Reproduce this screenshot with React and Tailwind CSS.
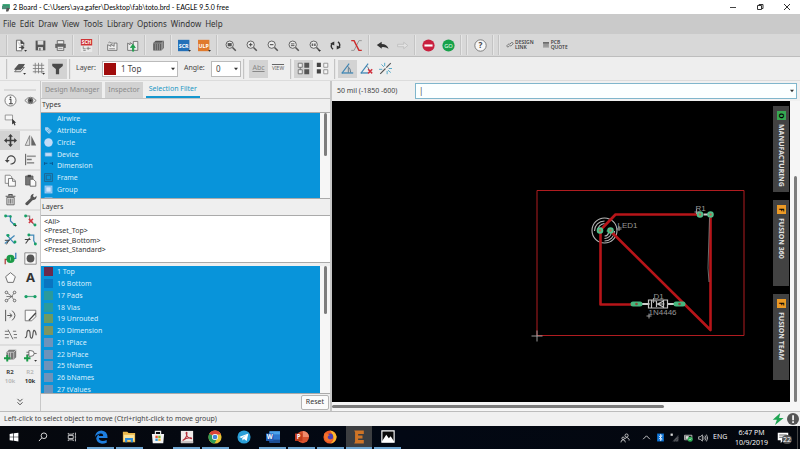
import React, { useState } from 'react';

const types = ['Airwire', 'Attribute', 'Circle', 'Device', 'Dimension', 'Frame', 'Group', 'Hole'];

const presets = ['<All>', '<Preset_Top>', '<Preset_Bottom>', '<Preset_Standard>'];

const layers = [
  { name: '1 Top', color: 'bg-[#6b2a4c]' },
  { name: '16 Bottom', color: 'bg-[#0a74c0]' },
  { name: '17 Pads', color: 'bg-[#2a9a9c]' },
  { name: '18 Vias', color: 'bg-[#2a9a9c]' },
  { name: '19 Unrouted', color: 'bg-[#6d9a62]' },
  { name: '20 Dimension', color: 'bg-[#7f9560]' },
  { name: '21 tPlace', color: 'bg-[#6e93ba]' },
  { name: '22 bPlace', color: 'bg-[#6e93ba]' },
  { name: '25 tNames', color: 'bg-[#6e93ba]' },
  { name: '26 bNames', color: 'bg-[#6e93ba]' },
  { name: '27 tValues', color: 'bg-[#6e93ba]' },
];

const lens = (
  <>
    <circle cx="7" cy="7" r="4.5" fill="#ececec" stroke="#555" strokeWidth="1.1" />
    <path d="M10.5 10.5L14.5 14.5" stroke="#555" strokeWidth="1.8" />
  </>
);

const corner = <path d="M12.5 13.5h3.5l-1.75 2.2z" fill="#333" stroke="none" />;

// every icon is drawn on a 16x16 grid
const icons = {
  open: <><path d="M3 1.5h6l3 3v4M3 1.5v13h7" stroke="#555" fill="#fafafa" /><path d="M8.5 1.5v4h4M6 10.5h6M9.5 8l3 2.5-3 2.5z" fill="#444" stroke="#444" />{corner}</>,
  save: <><path d="M2 2h12v12H2z" fill="#555" /><path d="M4.5 2h7v5h-7z" fill="#ddd" /><path d="M5 10h6v4H5z" fill="#ddd" /><path d="M6.5 11h1.5v3H6.500z" fill="#555" /></>,
  print: <><path d="M1.500 6h13v5h-13z" fill="#666" /><path d="M4 2h8v4H4zM4 9h8v5H4z" fill="#eee" stroke="#555" /><path d="M5.500 11.500h5" stroke="#777" /></>,
  sch: <><path d="M1 0h14v16H1z" fill="#e9e9e9" /><path d="M1 0h14v8H1z" fill="#cf3436" /><text x="8" y="6.500" fontSize="6" fontWeight="700" textAnchor="middle" fill="#fff">SCH</text><path d="M4 9v3h3M10 9.500v4M8 11.500h5M4 14h3" stroke="#777" fill="none" /></>,
  factory: <><path d="M2 14V7l4 2V6.500l4 2.500V5h3.500v9z" fill="#eee" stroke="#666" /><path d="M3 4.500q1.500-1.500 3 0t3 0M4 12h7" stroke="#777" fill="none" /></>,
  factoryUp: <><path d="M2 14V5l3 2V4.500l4 2.500V3h5.500v11z" fill="#eee" stroke="#666" /><path d="M8 15V10.500H5.500L8.500 6.500l3 4H9.500V15z" fill="#1f9d4c" stroke="#1f9d4c" /></>,
  library: <><path d="M1.500 5l3-3h10v9l-3 3h-10z" fill="#555" /><path d="M1.500 5h10v9M11.500 5l3-3M4 6v8M6.500 6v8M9 6v8M13 4v8" stroke="#bbb" strokeWidth=".8" fill="none" /></>,
  scr: <><path d="M0 1h14v14H0z" fill="#2470b8" /><text x="7" y="10.500" fontSize="6.500" fontWeight="700" textAnchor="middle" fill="#fff">SCR</text>{corner}</>,
  ulp: <><path d="M0 1h14v14H0z" fill="#e07a2d" /><text x="7" y="10.500" fontSize="6.500" fontWeight="700" textAnchor="middle" fill="#fff">ULP</text>{corner}</>,
  zoomFit: <>{lens}<path d="M4.500 5h5v4h-5z" fill="#555" /></>,
  zoomIn: <>{lens}<path d="M7 4.800v4.400M4.800 7h4.400" stroke="#444" strokeWidth="1.200" /></>,
  zoomOut: <>{lens}<path d="M4.800 7h4.400" stroke="#444" strokeWidth="1.300" /></>,
  zoomRedraw: <>{lens}<path d="M4.800 6h4.400M4.800 8.200h4.400" stroke="#444" strokeWidth="1.100" /></>,
  zoomSelect: <>{lens}<path d="M4.500 5.500h2v3h-2zM7.500 5.500h2v3h-2z" fill="#666" />{corner}</>,
  refresh: <><path d="M5 12.500A4.500 4.500 0 0 1 4.500 5M11 3.500a4.500 4.500 0 0 1 .5 7.500" stroke="#333" strokeWidth="1.800" fill="none" /><path d="M1.500 5.500L6.500 3v5zM14.500 10.500L9.500 13V8z" fill="#333" /></>,
  swap: <><path d="M14.500 2H11L5 14H1.500" stroke="#999" strokeWidth="1.200" fill="none" /><path d="M1.500 2H5L11 14h3.500" stroke="#cc2b2b" strokeWidth="1.800" fill="none" /></>,
  undo: <path d="M1 7.500L7 3.500V6q6.500 0 8.500 6-3.500-2.500-8.500-2v2z" fill="#333" />,
  redo: <path d="M14.500 8L9.500 4v2.500H2v3h7.500V12z" fill="#e2e2e2" stroke="#bcbcbc" />,
  stop: <><circle cx="8" cy="8" r="7.500" fill="#c9203f" /><path d="M3 6.700h10v2.600H3z" fill="#fff" /></>,
  go: <><circle cx="8" cy="8" r="7.500" fill="#17a14a" /><text x="8" y="10.500" fontSize="7" textAnchor="middle" fill="#e5ffe9">GO</text></>,
  help: <><circle cx="8" cy="8" r="7" fill="#f7f7f7" stroke="#666" /><text x="8" y="11.500" fontSize="10" fontWeight="700" textAnchor="middle" fill="#444">?</text></>,
  link: <path d="M7 9L5 11.500a2 2 0 0 1-3-2.500l2.500-2.500a2 2 0 0 1 3 0M8 6l2.500-2.500a2 2 0 0 1 3 3L11 9a2 2 0 0 1-3 0" stroke="#555" strokeWidth="1.500" fill="none" />,
  quote: <><path d="M2 2.500h12v11H2z" fill="#aaa" /><path d="M2 2.500h12v2.500H2z" fill="#555" /><path d="M3 7.500h10M3 10h10" stroke="#777" /></>,
  layerStack: <><path d="M2 12L7 6.500h7L9.500 12z" fill="#ddd" stroke="#555" /><path d="M2 9l5-6h7L9.500 9z" fill="#555" stroke="#444" />{corner}</>,
  grid: <><path d="M4 1v13M8 1v13M12 1v13M1 4h14M1 8h14M1 12h14" stroke="#777" />{corner}</>,
  filter: <path d="M1.500 2h13v3L10 8.500V15H6V8.500L1.500 5z" fill="#4a4a4a" />,
  moveGroupA: <><path d="M1.500 1.500h5v5h-5zM1.500 9.500h5v5h-5z" fill="#eee" stroke="#666" /><path d="M9 1h6v6H9zM9 9h6v6H9z" fill="#555" /><path d="M4 6.500v3" stroke="#666" /></>,
  moveGroupB: <><path d="M1 1h5v5H1zM1 9h5v5H1z" fill="#444" /><path d="M9.500 1.500h5v5h-5zM9.500 9.500h5v5h-5z" fill="#f5f5f5" stroke="#888" /></>,
  angle: <><path d="M1 14L10 2" stroke="#3f87b5" strokeWidth="1.300" /><path d="M1 13.500h14" stroke="#3f87b5" strokeWidth="1.600" /><path d="M8 5q4 3 4 8M9 7v6" stroke="#4b6a80" fill="none" /></>,
  angleOff: <><path d="M1 14L10 2" stroke="#3f87b5" strokeWidth="1.300" /><path d="M1 13.500h9" stroke="#3f87b5" strokeWidth="1.600" /><path d="M8 5q3 2 3 5" stroke="#4b6a80" fill="none" /><path d="M10 9l5 5M15 9l-5 5" stroke="#cf2f3d" strokeWidth="1.800" /></>,
  wand: <><path d="M1.500 14.500L8 8M9 7l5.500-5.500" stroke="#555" strokeWidth="1.400" /><path d="M7 1v4M3 3l3 3M12 8h4M0 9h4M10 11v4M11 10l3.500 3" stroke="#54a8c7" strokeWidth="1.200" /></>,
  info: <><circle cx="8" cy="8" r="6.800" fill="#fafafa" stroke="#666" /><path d="M6.500 6.500H8.500V12M6 12h5" stroke="#444" strokeWidth="1.300" fill="none" /><circle cx="8" cy="4.200" r="1" fill="#444" /></>,
  eye: <><path d="M1 8q7-8 14 0-7 8-14 0z" fill="#f3f3f3" stroke="#666" /><circle cx="8" cy="8" r="3.500" fill="#666" /><circle cx="8" cy="8" r="1.300" fill="#222" /></>,
  mark: <><path d="M1.500 2.500h9v6h-9z" fill="#f8f8f8" stroke="#888" /><path d="M10 7v7l1.800-1.500 1.200 3 1.200-.6-1.200-2.800H15z" fill="#333" /></>,
  move: <path d="M8 0l3 3.500H9V7h3.500V5L16 8l-3.500 3V9H9v3.500h2L8 16l-3-3.500h2V9H3.500v2L0 8l3.500-3v2H7V3.500H5z" fill="#3b3b3b" />,
  mirror: <><path d="M7 2v12H1.500z" fill="#ddd" stroke="#777" /><path d="M9 2v12h6z" fill="#666" /></>,
  rotate: <><path d="M4 10a5 5 0 1 1 4 3.500" stroke="#444" strokeWidth="1.400" fill="none" /><path d="M1 8.500h6L4 12z" fill="#444" /></>,
  align: <><path d="M2 1v14" stroke="#555" strokeWidth="1.200" /><path d="M3.500 3h11v2h-11z" fill="#999" /><path d="M3.500 7h6v2h-6zM3.500 11.500h9v1.500h-9z" fill="#777" /></>,
  copy: <><path d="M1.500 1.500h6l2 2v8h-8z" fill="#fafafa" stroke="#777" /><path d="M5.500 5.500h5.500l3 3v6.500H5.500zM10.500 5.500v3.500H14" fill="#fafafa" stroke="#666" /></>,
  paste: <><path d="M2 2.500h9v11H2z" fill="#777" stroke="#555" /><path d="M4.500 1h4v3h-4z" fill="#444" /><path d="M7.500 6.500h4l3 3v5.500h-7z" fill="#fafafa" stroke="#555" /></>,
  trash: <><path d="M2 4h12M6 3.500V2h4v1.500" stroke="#555" strokeWidth="1.300" fill="none" /><path d="M3.500 5.500h9V14.500h-9z" fill="#ddd" stroke="#555" /><path d="M6 7v6M8 7v6M10 7v6" stroke="#666" /></>,
  wrench: <path d="M1.500 12.500L8 6.500Q7.500 2 12 1l-1 3 2 1.500L15.500 3.500Q16 8.500 10.500 9L4.500 15.200q-3 0-3-2.700z" fill="#555" />,
  route: <><path d="M2 2.500h6v6l5 5" stroke="#3b7fb5" strokeWidth="1.500" fill="none" /><circle cx="2" cy="2.500" r="1.800" fill="#17a065" /><circle cx="8" cy="3" r="1.500" fill="#17a065" /><circle cx="13" cy="13" r="1.800" fill="#17a065" />{corner}</>,
  ripup: <><path d="M2 2.500h5v5l6 6" stroke="#777" strokeWidth="1.300" fill="none" /><circle cx="2" cy="2.500" r="1.800" fill="#17a065" /><circle cx="13.500" cy="13.500" r="1.800" fill="#17a065" /><path d="M6 6l5 5M11 6l-5 5" stroke="#d23440" strokeWidth="1.800" /></>,
  slice: <><path d="M1 13L13 3M3 2l10 11" stroke="#4289b8" strokeWidth="1.500" /><circle cx="5" cy="3" r="1.800" fill="#17a065" /><circle cx="13.500" cy="11" r="1.800" fill="#17a065" /><path d="M1 9h6M3 14l3-5" stroke="#444" strokeWidth="1.200" /></>,
  split: <><path d="M6 2.500h6v7l2 4" stroke="#4289b8" strokeWidth="1.500" fill="none" /><circle cx="6" cy="2.500" r="1.800" fill="#17a065" /><circle cx="14" cy="13.500" r="1.800" fill="#17a065" /><path d="M1 8h7M2 13l5-7" stroke="#444" strokeWidth="1.300" /></>,
  via: <><path d="M1.500 15V9H8" stroke="#b03a3a" strokeWidth="1.500" fill="none" /><path d="M14.500 1v7H8" stroke="#2878b8" strokeWidth="1.500" fill="none" /><circle cx="8" cy="8.500" r="5" fill="#1c9a48" /><path d="M8 6.500v4" stroke="#8fe0a4" /></>,
  hole: <><path d="M1 1h14v14H1z" fill="#fafafa" stroke="#777" /><circle cx="8" cy="8" r="4.800" fill="#555" /></>,
  polygon: <path d="M8 2l6 5-2.500 7h-7L2 7z" fill="#fafafa" stroke="#555" />,
  text: <text x="8" y="14" fontSize="16" fontWeight="700" textAnchor="middle" fill="#333">A</text>,
  net: <><path d="M3 3q5 2 10 10M13 3Q10 9 3 13M3 8h8" stroke="#666" fill="none" /><circle cx="3" cy="3" r="1.600" fill="#eee" stroke="#555" /><circle cx="13" cy="3" r="1.600" fill="#eee" stroke="#555" /><circle cx="3" cy="13" r="1.600" fill="#eee" stroke="#555" /><circle cx="13" cy="13" r="1.600" fill="#eee" stroke="#555" /></>,
  wire: <><path d="M2 8h12" stroke="#58a98a" strokeWidth="1.500" /><circle cx="2.500" cy="8" r="2" fill="#17a065" /><circle cx="13.500" cy="8" r="2" fill="#17a065" /></>,
  arc: <path d="M2 1v14M4 8h5M7 5.500L10 8l-3 2.500M10 2q7 6 0 12" stroke="#555" strokeWidth="1.200" fill="none" />,
  miter: <><path d="M1.500 1.500h13v8l-5 5h-8z" fill="#fafafa" stroke="#666" /><path d="M6 14L14.500 5" stroke="#444" strokeWidth="1.600" /></>,
  optimize: <path d="M1 4h5M1 8h5M1 12h5M5 2l6 12M11 4h4M12 8h4M12 12h4" stroke="#666" strokeWidth="1.100" fill="none" />,
  meander: <path d="M1 12q2.500 0 2.500-4.500t2-4.500 2 4.500 1.500 5 2-5 2-4.500 2 6" stroke="#555" strokeWidth="1.400" fill="none" />,
  addPart: <><path d="M3 4l3-3h9v9l-3 3H3z" fill="#777" /><path d="M3 4h9v9M12 4l3-3M5.500 4v8M8 4v8" stroke="#ccc" fill="none" /><path d="M4 7.500v8M0 11.500h8" stroke="#1c9a48" strokeWidth="2.400" /></>,
  addGate: <><path d="M6 2h2.500q4 0 4 3.500t-4 3.500H6zM3 4h3M3 7h3M12.500 5.500h3" fill="#fafafa" stroke="#555" /><path d="M4 7.500v8M0 11.500h8" stroke="#1c9a48" strokeWidth="2.400" />{corner}</>,
  more: <path d="M4 3l4 4 4-4M4 8.500l4 4 4-4" stroke="#444" strokeWidth="1.500" fill="none" />,
  windows: <path d="M1 3l6-1v5.500H1zM8 1.800L15 1v6.500H8zM1 8.500h6V14l-6-1zM8 8.500h7V15l-7-1z" fill="#fff" />,
  search: <><circle cx="9.500" cy="6" r="4.500" fill="none" stroke="#eee" strokeWidth="1.400" /><path d="M6 9.500L1.500 14.500" stroke="#eee" strokeWidth="1.500" /></>,
  taskView: <><path d="M2 5.500h8v5H2zM2 1.500v2h8v-2M2 14.500v-2h8v2M13.500 1v5M13.500 10v5" fill="none" stroke="#e6e6e6" strokeWidth="1.300" /><path d="M12.500 7h2v2h-2z" fill="#fff" /></>,
  edge: <path d="M1 8Q2 .5 8.500 .5 15.500 1 15.500 9H5.500q.5 3.500 4.500 3.500 2.500 0 4.500-1v3Q12 15.700 9 15.700 3 15 2.500 9.500 3 6 6.500 4.500 5.500 5.500 5.500 6.800H10.500Q10.500 4 8 4 3.500 4 1 8z" fill="#1e7fe0" />,
  explorer: <><path d="M1 2h5l1.500 1.500H15V14H1z" fill="#e9b84c" /><path d="M2 5.500h12V12H2z" fill="#fbe49a" /><path d="M3.500 9h9v5h-2.500v-2.500H6V14H3.500z" fill="#2f8fdc" /></>,
  store: <><path d="M5 5V1.500h6V5" fill="none" stroke="#eee" strokeWidth="1.300" /><path d="M1 4.500h14l-1 10.500H2z" fill="#f3f3f3" /><path d="M5 6.500h2.700v2.700H5z" fill="#e5502f" /><path d="M8.300 6.500H11v2.700H8.300z" fill="#7ab52c" /><path d="M5 9.800h2.700v2.700H5z" fill="#2f96dc" /><path d="M8.300 9.800H11v2.700H8.300z" fill="#eeb429" /></>,
  acrobat: <><path d="M1 1h14v14H1z" fill="#f1eceb" /><path d="M1 12.500h14V15H1z" fill="#c9c4c4" /><path d="M3 12q5-3 5-9-1-1-1 1 1 5 6 6 1-1-1-1.200Q7 8.500 3 12z" fill="none" stroke="#b5303a" strokeWidth="1.200" /></>,
  chrome: <><circle cx="8" cy="8" r="7.500" fill="#e9c534" /><path d="M8 8L1.500 4.300A7.500 7.500 0 0 1 14.800 5H8z" fill="#db4437" /><path d="M8 8L1.500 4.300A7.500 7.500 0 0 0 7.500 15.500L10.500 9.500z" fill="#2d9c57" /><circle cx="8" cy="8" r="3.500" fill="#fff" /><circle cx="8" cy="8" r="2.700" fill="#4285d8" /></>,
  telegram: <><circle cx="8" cy="8" r="7.500" fill="#2b9fd8" /><path d="M2.500 8L13 4l-2 8.500-3-2.200-1.700 1.700-.3-3L11 5.500 5 9z" fill="#fff" /></>,
  word: <><path d="M4 1.500h12v13H4z" fill="#2f78cf" /><path d="M4 1.500h12V5H4z" fill="#4da3ea" /><path d="M4 11h12v3.500H4z" fill="#1b4c94" /><path d="M0 4h8.500v8.500H0z" fill="#1f5bb5" /><text x="4.200" y="10.800" fontSize="7" fontWeight="700" textAnchor="middle" fill="#fff">W</text></>,
  powerpoint: <><circle cx="9" cy="8" r="7" fill="#d9532f" /><path d="M9 1a7 7 0 0 1 7 7H9z" fill="#f08a6b" /><path d="M0 4h8.500v8.500H0z" fill="#c13b1b" /><text x="4.200" y="10.800" fontSize="7" fontWeight="700" textAnchor="middle" fill="#fff">P</text></>,
  firefox: <><circle cx="8" cy="8" r="7.500" fill="#ee5a24" /><path d="M8 .5q6 1 7.500 7-.5 7-7 8 5-4 3-9-1-3-3.500-6z" fill="#f9b92c" /><circle cx="8" cy="7.500" r="3.600" fill="#4b3fb3" /><path d="M1.500 4q2-1 4 .5L8 6q-3 0-2.500 3 2 3 6 1-3 5-8 2-3-3-2-8z" fill="#f3722c" /></>,
  eagle: <path d="M2.500 .500h11v4H7v1.700h5v3.500H7v1.800h6.500v4h-11l1-2V2.500z" fill="#cf7426" />,
  photos: <><path d="M1 1h14v13H1z" fill="#0a0a0a" stroke="#fff" strokeWidth="1.300" /><path d="M1 13l5-7.500 3 4 2-2.500 4 6v1H1z" fill="#fff" /></>,
  people: <path d="M10.500 1.500a2.500 2.500 0 1 1 0 5 2.500 2.500 0 0 1 0-5M8 9.500q2.500-5 6.500.5v2M5 6.500a2 2 0 1 1 0 4 2 2 0 0 1 0-4M1.500 15q0-4 3.500-4t3.500 4" fill="none" stroke="#ddd" strokeWidth="1.300" />,
  chevronUp: <path d="M2 11l6-6 6 6" fill="none" stroke="#e5e5e5" strokeWidth="1.500" />,
  bluetooth: <><path d="M2 1h12v14H2z" fill="#0f74d6" /><path d="M5 5l6 6-3 2.500v-11L11 5l-6 6" fill="none" stroke="#fff" strokeWidth="1.300" /></>,
  signal: <><path d="M15 3v12H4z" fill="#3b3f47" /><path d="M1 1h4v4H1z" fill="#ddd" /><path d="M8 15q0-5 7-7M12 15q0-3 3-4" stroke="#777" fill="none" /></>,
  battery: <><path d="M1 4h13v8H1z" fill="#111" stroke="#ddd" strokeWidth="1.400" /><path d="M2.500 5.500h6v5h-6z" fill="#ddd" /><circle cx="11" cy="11" r="4.500" fill="#2fae57" /><path d="M9 11l1.500 1.500L13 9.500" stroke="#fff" fill="none" /></>,
  volume: <path d="M1 6h2.500L7 3v10L3.500 10H1zM9 5.500q2 2.500 0 5M11.300 4q3 4 0 8M13.500 2.500q4 5.500 0 11" fill="none" stroke="#ddd" strokeWidth="1.200" />,
  bolt: <path d="M11 0L1 9h5.500L4 16 15.500 6.500H9.500z" fill="#1fa553" />,
  alert: <><circle cx="8" cy="8" r="8" fill="#555" /><path d="M7 3h2.200v6.500H7zM7 11h2.200v2.200H7z" fill="#fff" /></>,
  tagWhite: <><path d="M2 2h5l7 7-5 5-7-7z" fill="#a9d3f3" /><path d="M5 7l5 4M7 5l5 4" stroke="#0a94da" /></>,
  circleWhite: <circle cx="8" cy="8" r="7.500" fill="#c3dcf8" />,
  device: <path d="M2 5h12v6H2z" fill="#c3dcf8" stroke="#7fb7e6" />,
  dimension: <path d="M1 2v5M15 2v5M2 4h4M10 4h4" stroke="#0b4f86" strokeWidth="1.600" />,
  frame: <path d="M1 1h14v14H1zM4 4h8v8H4z" fill="none" stroke="#235e86" strokeWidth="1.400" />,
  group: <><path d="M1 1h14v14H1z" fill="#9ccaf3" /><path d="M3.500 3.500h9v9h-9z" fill="#cfe4fb" stroke="#6fb0e5" /></>,
  holeWhite: <><path d="M1 1h14v14H1z" fill="#e7d9ea" /><circle cx="8" cy="8" r="4" fill="#4b5ea6" /></>,
};

const typeIcons = [null, 'tagWhite', 'circleWhite', 'device', 'dimension', 'frame', 'group', 'holeWhite'];

const Icon = ({ name, className = 'size-3' }) => (
  <svg viewBox="0 0 16 16" className={`shrink-0 overflow-visible ${className}`} fill="none" aria-hidden="true">
    {icons[name]}
  </svg>
);

const ToolButton = ({ name, active, className = 'w-5 h-5' }) => (
  <button
    type="button"
    aria-label={name}
    className={`flex shrink-0 items-center justify-center ${className} ${active ? 'bg-[#d3d3d3]' : ''}`}
  >
    <Icon name={name} className="size-[13px]" />
  </button>
);

const ToolGroup = ({ names }) => (
  <div className="flex items-center">
    {names.map((n) => <ToolButton key={n} name={n} />)}
  </div>
);

const Divider = () => <span className="mx-[2px] h-5 w-[2px] shrink-0 border-l border-[#c4c4c4] bg-[#e6e6e6]" />;

const TitleBar = () => (
  <header className="flex h-[14px] shrink-0 items-center bg-white pl-[2px] font-['Open_Sans',sans-serif] text-black">
    <svg viewBox="0 0 16 16" className="size-[9px]" aria-hidden="true">
      <path d="M1 2h13v8H1z" fill="#2a9d6a" />
      <path d="M0 5h12v6H0z" fill="#4a8f78" />
      <path d="M8 9h6l-3 6H7z" fill="#555" />
    </svg>
    <h1 className="ml-[2px] grow font-['Lato',sans-serif] text-[7px] whitespace-nowrap">2 Board - C:\Users\aya.gafer\Desktop\fab\toto.brd - EAGLE 9.5.0 free</h1>
    <div className="flex">
      <button type="button" aria-label="Minimize" className="flex w-[27px] justify-center">
        <svg viewBox="0 0 8 8" className="size-2"><path d="M1 4.500h6" stroke="#444" /></svg>
      </button>
      <button type="button" aria-label="Restore" className="flex w-[27px] justify-center">
        <svg viewBox="0 0 8 8" className="size-2"><path d="M1.500 2.500h4v4h-4zM3 2.500v-1h4v4H5.500" fill="none" stroke="#333" /></svg>
      </button>
      <button type="button" aria-label="Close" className="flex w-[27px] justify-center">
        <svg viewBox="0 0 8 8" className="size-2"><path d="M1 1l6 6M7 1L1 7" stroke="#333" /></svg>
      </button>
    </div>
  </header>
);

const MenuBar = () => (
  <nav className="flex h-5 shrink-0 items-center gap-1 bg-[#cacaca] px-[3px] text-[8px] text-[#333]">
    {['File', 'Edit', 'Draw', 'View', 'Tools', 'Library', 'Options', 'Window', 'Help'].map((m) => (
      <button key={m} type="button">{m}</button>
    ))}
  </nav>
);

const MainToolbar = () => (
  <div className="flex h-[23px] shrink-0 items-center border-b border-[#bdbdbd] bg-[#d8d8d8] pl-1">
    <Divider />
    <ToolGroup names={['open', 'save', 'print']} />
    <Divider />
    <ToolGroup names={['sch']} />
    <Divider />
    <ToolGroup names={['factory', 'factoryUp']} />
    <Divider />
    <ToolGroup names={['library']} />
    <Divider />
    <ToolGroup names={['scr', 'ulp']} />
    <Divider />
    <div className="flex gap-px">
      {['zoomFit', 'zoomIn', 'zoomOut', 'zoomRedraw', 'zoomSelect', 'refresh', 'swap'].map((n) => (
        <ToolButton key={n} name={n} />
      ))}
    </div>
    <Divider />
    <ToolGroup names={['undo', 'redo']} />
    <Divider />
    <ToolGroup names={['stop', 'go']} />
    <Divider />
    <Divider />
    <ToolGroup names={['help']} />
    <Divider />
    <Divider />
    <button type="button" className="ml-1 flex items-center gap-px text-left text-[5px] leading-[5px] font-semibold text-[#444]">
      <Icon name="link" className="size-2" />
      <span>DESIGN<br />LINK</span>
    </button>
    <button type="button" className="ml-2 flex items-center gap-px text-left text-[5px] leading-[5px] font-semibold text-[#444]">
      <Icon name="quote" className="size-2" />
      <span>PCB<br />QUOTE</span>
    </button>
  </div>
);

const Caret = () => (
  <svg viewBox="0 0 6 6" className="pointer-events-none mr-[2px] size-1 shrink-0" aria-hidden="true">
    <path d="M0 1h6L3 5z" fill="#333" />
  </svg>
);

const OptionsBar = () => (
  <div className="flex h-6 shrink-0 items-center border-b border-[#dcdcdc] bg-[#eee] pl-1 text-[7px] text-[#444]">
    <Divider />
    <ToolButton name="layerStack" className="h-5 w-[19px]" />
    <ToolButton name="grid" className="h-5 w-[19px]" />
    <ToolButton name="filter" active className="h-5 w-[19px]" />
    <Divider />
    <label htmlFor="layer" className="ml-[3px] w-[26px]">Layer:</label>
    <div className="flex h-4 w-[76px] items-center border border-[#bbb] bg-white text-[8px]">
      <span className="mx-px size-3 bg-[#a00c0c]" />
      <select id="layer" className="min-w-0 grow appearance-none bg-transparent pl-1 outline-none">
        <option>1 Top</option>
        <option>16 Bottom</option>
      </select>
      <Caret />
    </div>
    <label htmlFor="angle" className="ml-[6px] w-[27px]">Angle:</label>
    <div className="flex h-4 w-[30px] items-center border border-[#bbb] bg-white text-[8px]">
      <select id="angle" className="min-w-0 grow appearance-none bg-transparent pl-1 outline-none">
        <option>0</option>
        <option>45</option>
        <option>90</option>
      </select>
      <Caret />
    </div>
    <Divider />
    <button type="button" className="ml-[2px] h-[18px] w-[19px] bg-[#d3d3d3] text-[#888] underline">Abc</button>
    <button type="button" className="h-[18px] w-5 text-[5px] text-[#666] overline">VIEW</button>
    <Divider />
    <ToolButton name="moveGroupA" active className="h-[18px] w-[19px]" />
    <ToolButton name="moveGroupB" className="h-[18px] w-[19px]" />
    <Divider />
    <ToolButton name="angle" active className="h-[18px] w-[19px]" />
    <ToolButton name="angleOff" className="h-[18px] w-[19px]" />
    <ToolButton name="wand" className="h-[18px] w-[19px]" />
  </div>
);

const paletteGroups = [
  ['info', 'eye', 'mark', null],
  ['move', 'mirror', 'rotate', 'align'],
  ['copy', 'paste', 'trash', 'wrench'],
  ['route', 'ripup', 'slice', 'split', 'via', 'hole', 'polygon', 'text', 'net', 'wire', 'arc', 'miter', 'optimize', 'meander'],
];

const Palette = () => (
  <aside className="flex w-[41px] shrink-0 flex-col border-r border-[#c8c8c8] bg-[#efefef] pt-2">
    <div className="mx-1 h-[2px] border-y border-[#dadada]" />
    {paletteGroups.map((group) => (
      <div key={group[0]} className="grid grid-cols-2 border-b-2 border-[#dedede]">
        {group.map((n, i) => (n
          ? <ToolButton key={n} name={n} active={n === 'move'} className="h-[19px] w-full" />
          : <span key={i} />))}
      </div>
    ))}
    <div className="grid grid-cols-2">
      <ToolButton name="addPart" className="h-[19px] w-full" />
      <ToolButton name="addGate" className="h-[19px] w-full" />
    </div>
    <div className="grid grid-cols-2 border-t border-[#dedede] pt-px text-center text-[6px] leading-[9px] font-bold">
      <button type="button" className="h-[19px] text-[#444]">R2<br /><span className="text-[#bbb]">10k</span></button>
      <button type="button" className="h-[19px] text-[#bbb]">R2<br /><span className="text-[#333]">10k</span></button>
    </div>
    <button type="button" aria-label="More tools" className="mt-auto mb-1 flex justify-center">
      <Icon name="more" className="size-[10px]" />
    </button>
  </aside>
);

const Scroll = ({ thumb }) => (
  <div className="flex w-[10px] shrink-0 justify-center bg-[#f6f6f6]">
    <span className={`w-[3px] rounded-full bg-[#7d7d7d] ${thumb}`} />
  </div>
);

const FilterPanel = () => {
  const [tab, setTab] = useState('Selection Filter');

  return (
    <section className="flex w-[291px] shrink-0 flex-col border-r-2 border-[#c6c6c6] bg-[#efefef] text-[7px] text-[#333]">
      <div className="flex h-[18px] items-end gap-[3px] border-b border-[#c4c4c4] pl-px">
        {['Design Manager', 'Inspector', 'Selection Filter'].map((t) => (
          <button
            key={t}
            type="button"
            onClick={() => setTab(t)}
            className={`h-4 px-[3px] whitespace-nowrap ${
              tab === t ? 'border-b-2 border-[#1597cf] text-[#1c97c4]' : 'bg-[#d2d2d2] text-[#8a8a8a]'
            }`}
          >
            {t}
          </button>
        ))}
      </div>

      <h2 className="h-[13px] pl-px leading-[11px]">Types</h2>
      <div className="flex h-[87px] overflow-hidden border-y border-[#aaa] bg-white">
        <ul className="flex h-[94px] grow flex-col bg-[#0894da] leading-[11px] text-[#d9effc]">
          {types.map((t, i) => (
            <li key={t} className="flex flex-1 items-center gap-1 pl-[3px]">
              <span className="w-[9px]">
                {typeIcons[i] && <Icon name={typeIcons[i]} className="size-[9px]" />}
              </span>
              {t}
            </li>
          ))}
        </ul>
        <Scroll thumb="h-[43px]" />
      </div>

      <h2 className="h-4 pl-px leading-4">Layers</h2>
      <ul className="flex h-12 flex-col border-y border-[#aaa] bg-white pt-px pb-2 pl-[3px] leading-[9px]">
        {presets.map((p) => (
          <li key={p} className="flex flex-1 items-center">{p}</li>
        ))}
      </ul>

      <div className="mt-[3px] flex h-32 overflow-hidden border-b border-[#aaa] bg-white">
        <ul className="flex h-[129px] grow flex-col bg-[#0894da] leading-[11px] text-[#d9effc]">
          {layers.map((l) => (
            <li key={l.name} className="flex flex-1 items-center gap-1 pl-[3px]">
              <span className={`size-[9px] ${l.color}`} />
              {l.name}
            </li>
          ))}
        </ul>
        <Scroll thumb="h-12" />
      </div>

      <div className="flex grow items-center justify-end pr-px">
        <button type="button" className="h-[15px] rounded-xs border border-[#b4b4b4] bg-[#fbfbfb] px-1">Reset</button>
      </div>
    </section>
  );
};

// board coordinates are window coordinates of the drawing area
const Board = () => (
  <svg viewBox="333 101 457 301" className="h-full w-full" role="img" aria-label="Board layout">
    <path d="M537.500 190.500h207v145h-207z" fill="none" stroke="#b01c20" />
    <g fill="none" stroke="#b5b5b5" strokeWidth="1.100">
      <circle cx="605" cy="230.500" r="12.500" />
      <path d="M595 231a10 10 0 0 1 10-10M598 231a7.500 7.500 0 0 1 7-7.500M615 231a10 10 0 0 1-10 10M612 232a7.500 7.500 0 0 1-7 6.500M609 233a4 4 0 0 1-4 3" />
    </g>
    <g fill="none" stroke="#b71519" strokeWidth="2.600" strokeLinejoin="round" strokeLinecap="round">
      <path d="M701 214.500H616L601 230V304.500H637" />
      <path d="M611 231L711 330V214" />
    </g>
    <path d="M710 218l-1.500 50 1 14" fill="none" stroke="#888" strokeWidth=".8" />
    <path d="M704 214.500h6M642 304h8M668 304h10" stroke="#ccc" strokeWidth="2" />
    <path d="M607 231h4" stroke="#35a86b" />
    <g fill="#b56b50" stroke="#4fbf8a" strokeWidth="2">
      <circle cx="600.500" cy="230.500" r="2.300" />
      <circle cx="611" cy="230.500" r="2.300" />
      <circle cx="700.500" cy="214.500" r="2.300" />
      <circle cx="711" cy="214.500" r="2.300" />
    </g>
    <rect x="631" y="301.500" width="12" height="5" rx="2.500" fill="#45b77e" />
    <rect x="674" y="301.500" width="12" height="5" rx="2.500" fill="#45b77e" />
    <circle cx="637" cy="304" r="1.300" fill="#8a4a3c" />
    <circle cx="680" cy="304" r="1.300" fill="#8a4a3c" />
    <g fill="none" stroke="#c4c4c4" strokeWidth="1.200">
      <path d="M649 300h19v8h-19zM652 300v8M657 304h8M657 301v6M664 301l-6 3 6 3z" />
    </g>
    <g stroke="#aaa" strokeWidth=".9">
      <path d="M532 336h11M537.500 330.500v11M617 229h5M619.500 226v5M695 212h5M697 209v5M647 316h5M649.500 313.500v5M652 301h5M654 298v5" />
    </g>
    <g fill="#979797" fontSize="8" className="font-['Liberation_Sans',sans-serif]">
      <text x="618" y="228">LED1</text>
      <text x="696" y="211">R1</text>
      <text x="654" y="299">D1</text>
      <text x="649" y="315">1N4446</text>
    </g>
  </svg>
);

const SideTab = ({ label, badge, color }) => (
  <button
    type="button"
    className="flex h-[86px] w-4 items-center gap-1 bg-[#424242] pt-[5px] text-[7px] leading-4 font-bold whitespace-nowrap text-[#e2e2e2] [writing-mode:vertical-rl]"
  >
    <span className={`flex size-[9px] items-center justify-center text-[7px] leading-[9px] text-black ${color}`}>{badge}</span>
    {label}
  </button>
);

const Workspace = () => (
  <main className="flex min-w-0 grow flex-col bg-[#f0f0f0]">
    <div className="flex h-5 shrink-0 items-center pr-[3px] pl-[5px] text-[7px] text-[#444]">
      <label htmlFor="command" className="w-[78px] shrink-0">50 mil (-1850 -600)</label>
      <div className="flex h-4 grow items-center border border-[#7fb6cc] bg-[#fbffff]">
        <input id="command" type="text" defaultValue="|" className="min-w-0 grow bg-transparent pl-[3px] text-[8px] outline-none" />
        <Caret />
      </div>
    </div>
    <div className="flex min-h-0 grow">
      <div className="relative min-w-0 grow bg-black">
        <div className="absolute inset-0"><Board /></div>
        <div className="absolute top-[5px] right-px flex flex-col gap-2">
          <SideTab label="MANUFACTURING" badge="O" color="bg-[#36a852]" />
          <SideTab label="FUSION 360" badge="F" color="bg-[#ec9a25]" />
          <SideTab label="FUSION TEAM" badge="F" color="bg-[#ec9a25]" />
        </div>
      </div>
      <div className="flex w-[10px] shrink-0 items-end justify-center bg-[#f6f6f6]">
        <span className="h-3/4 w-[3px] rounded-full bg-[#7d7d7d]" />
      </div>
    </div>
    <div className="flex h-[9px] shrink-0 items-center bg-[#f6f6f6]">
      <span className="h-[3px] w-[71%] rounded-full bg-[#7d7d7d]" />
    </div>
  </main>
);

const StatusBar = () => (
  <div className="flex h-[15px] shrink-0 items-center border-t border-[#bcbcbc] bg-[#f0f0f0] pr-px pl-[4px] text-[7px] text-[#444]">
    <p className="grow">Left-click to select object to move (Ctrl+right-click to move group)</p>
    <Icon name="bolt" className="mr-[3px] size-3" />
    <Icon name="alert" />
  </div>
);

const apps = [
  { name: 'windows' },
  { name: 'search' },
  { name: 'taskView' },
  { name: 'edge', open: true },
  { name: 'explorer', open: true },
  { name: 'store' },
  { name: 'acrobat', open: true },
  { name: 'chrome', open: true },
  { name: 'telegram' },
  { name: 'word', open: true },
  { name: 'powerpoint', open: true },
  { name: 'firefox', open: true },
  { name: 'eagle', open: true, focused: true },
  { name: 'photos', open: true },
];

const small = ['windows', 'search', 'taskView'];

const Taskbar = () => (
  <footer className="flex h-[23px] shrink-0 items-stretch bg-linear-to-r from-[#06080d] via-[#020814] to-[#04070d] font-['Open_Sans',sans-serif] text-white">
    <div className="flex w-[402px] shrink-0">
      {apps.map((a) => (
        <button
          key={a.name}
          type="button"
          aria-label={a.name}
          className={`mx-px flex flex-1 items-center justify-center border-b-2 ${
            a.open ? 'border-[#6ea6d3]' : 'border-transparent'
          } ${a.focused ? 'bg-[#3c3e41]' : ''}`}
        >
          <Icon name={a.name} className={small.includes(a.name) ? 'size-[10px]' : 'size-[14px]'} />
        </button>
      ))}
    </div>
    <div className="flex grow items-center justify-end">
      <Icon name="people" className="mr-3 size-[10px]" />
      <div className="flex items-center gap-[5px]">
        <Icon name="chevronUp" className="size-[9px]" />
        <Icon name="bluetooth" className="size-[9px]" />
        <Icon name="signal" className="size-[9px]" />
        <Icon name="battery" className="size-[9px]" />
        <Icon name="volume" className="size-[10px]" />
      </div>
      <span className="ml-[5px] w-[17px] text-[7px]">ENG</span>
      <time className="ml-1 w-[35px] text-center text-[7px] leading-[10px]">6:47 PM<br />10/9/2019</time>
      <button type="button" aria-label="Notifications" className="relative ml-2 flex w-[19px] items-center">
        <svg viewBox="0 0 16 16" className="size-3" aria-hidden="true">
          <path d="M1 1h14v10H8l-3 4v-4H1z" fill="#fff" />
          <path d="M3 4h10M3 7h10" stroke="#333" />
        </svg>
        <span className="absolute top-[3px] left-[5px] rounded-full bg-[#555] px-px text-[7px] leading-[9px]">22</span>
      </button>
      <span className="ml-px h-full w-[3px] border-l border-[#444]" />
    </div>
  </footer>
);

const App = () => (
  <div className="flex h-screen flex-col overflow-hidden bg-[#efefef] font-['Noto_Sans',sans-serif]">
    <TitleBar />
    <MenuBar />
    <MainToolbar />
    <OptionsBar />
    <div className="flex min-h-0 grow">
      <Palette />
      <FilterPanel />
      <Workspace />
    </div>
    <StatusBar />
    <Taskbar />
  </div>
);

export default App;
